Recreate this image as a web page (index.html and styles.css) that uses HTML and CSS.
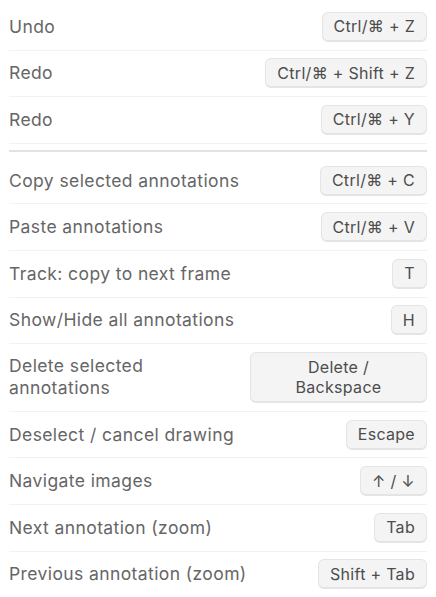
FILE: index.html
```html
<!DOCTYPE html>
<html>
<head>
<meta charset="utf-8">
<link rel="stylesheet" href="styles.css">
</head>
<body>
<div class="list">
  <div class="row"><span class="label">Undo</span><span class="key">Ctrl/⌘ + Z</span></div>
  <div class="row"><span class="label">Redo</span><span class="key">Ctrl/⌘ + Shift + Z</span></div>
  <div class="row"><span class="label">Redo</span><span class="key">Ctrl/⌘ + Y</span></div>
  <div class="divider"></div>
  <div class="row"><span class="label">Copy selected annotations</span><span class="key">Ctrl/⌘ + C</span></div>
  <div class="row"><span class="label">Paste annotations</span><span class="key">Ctrl/⌘ + V</span></div>
  <div class="row"><span class="label">Track: copy to next frame</span><span class="key">T</span></div>
  <div class="row"><span class="label">Show/Hide all annotations</span><span class="key">H</span></div>
  <div class="row"><span class="label">Delete selected annotations</span><span class="key key-wide">Delete / Backspace</span></div>
  <div class="row"><span class="label">Deselect / cancel drawing</span><span class="key">Escape</span></div>
  <div class="row"><span class="label">Navigate images</span><span class="key">↑ / ↓</span></div>
  <div class="row"><span class="label">Next annotation (zoom)</span><span class="key">Tab</span></div>
  <div class="row"><span class="label">Previous annotation (zoom)</span><span class="key">Shift + Tab</span></div>
</div>
</body>
</html>
```
FILE: styles.css
```css
html, body {
  margin: 0;
  padding: 0;
  background: #ffffff;
}
body {
  font-family: Inter, "Noto Sans", sans-serif;
  color: #666666;
}
.list {
  display: flex;
  flex-direction: column;
  padding: 4px 9px 0 9px;
}
.row {
  display: flex;
  align-items: center;
  justify-content: space-between;
  gap: 16px;
  padding: 7.8px 0;
  border-bottom: 1px solid #f2f2f2;
  min-height: 30px;
}
.label {
  font-size: 17.5px;
  line-height: 22px;
  letter-spacing: 0.4px;
  color: #666666;
}
.key {
  flex-shrink: 0;
  font-size: 16px;
  line-height: 20px;
  letter-spacing: 0.3px;
  color: #4d4d4d;
  background: #f4f4f4;
  border: 1px solid #e4e4e4;
  border-bottom-width: 2px;
  border-radius: 6px;
  padding: 3.5px 11px;
  text-align: center;
  white-space: nowrap;
}
.key-wide {
  box-sizing: border-box;
  width: 177px;
  padding: 4px 30px;
  white-space: normal;
}
.divider {
  height: 2px;
  background: #e2e2e2;
  margin: 6px 0;
}
```
